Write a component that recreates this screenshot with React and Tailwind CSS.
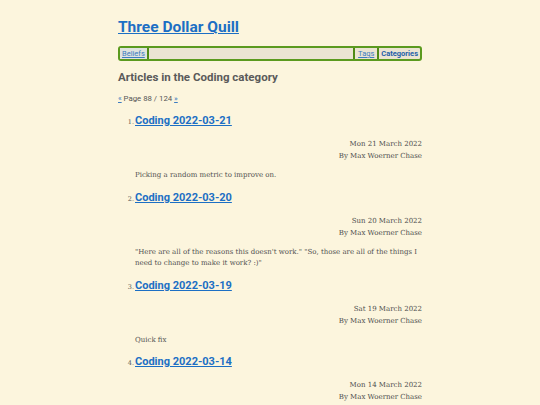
const articles = [
  {
    n: 1,
    title: 'Coding 2022-03-21',
    date: 'Mon 21 March 2022',
    summary: 'Picking a random metric to improve on.',
  },
  {
    n: 2,
    title: 'Coding 2022-03-20',
    date: 'Sun 20 March 2022',
    summary:
      '"Here are all of the reasons this doesn\'t work." "So, those are all of the things I need to change to make it work? :)"',
  },
  {
    n: 3,
    title: 'Coding 2022-03-19',
    date: 'Sat 19 March 2022',
    summary: 'Quick fix',
  },
  {
    n: 4,
    title: 'Coding 2022-03-14',
    date: 'Mon 14 March 2022',
    summary: '',
  },
];

const sans = "font-['Roboto',_'Noto_Sans',_sans-serif]";
const serif = "font-['DejaVu_Serif',_'Liberation_Serif',_serif]";

function NavBar() {
  return (
    <nav className={`flex items-stretch h-[15px] mt-[7px] border-2 border-[#5b9a1e] rounded-[3px] bg-[#ebe4d2] text-[7.5px] leading-[11px] ${sans}`}>
      <a href="#" className="px-[2px] bg-[#dfe3df] text-[#3d7cc0] underline">Beliefs</a>
      <span className="w-[2px] bg-[#4f8a16]" />
      <span className="flex-1" />
      <span className="w-[2px] bg-[#4f8a16]" />
      <a href="#" className="px-[3px] text-[#3d7cc0] underline">Tags</a>
      <span className="w-[2px] bg-[#4f8a16]" />
      <a href="#" className="px-[2px] font-bold text-[#1f5fa8]">Categories</a>
    </nav>
  );
}

function Article({ a }) {
  return (
    <li className="flex flex-col">
      <div className="flex items-baseline">
        <span className={`w-[17px] text-right pr-[1px] text-[6.5px] text-[#555] ${serif}`}>{a.n}.</span>
        <a href="#" className={`text-[11px] leading-[20px] font-bold text-[#1c6fc4] underline ${sans}`}>{a.title}</a>
      </div>
      <div className={`flex flex-col items-end mt-[7px] text-[7px] leading-[12px] text-[#4d4d4d] ${serif}`}>
        <span>{a.date}</span>
        <span>By Max Woerner Chase</span>
      </div>
      {a.summary && (
        <p className={`pl-[17px] mt-[8px] mb-[4px] text-[7px] leading-[11.5px] text-[#505050] ${serif}`}>
          {a.summary}
        </p>
      )}
    </li>
  );
}

export default function App() {
  return (
    <div className="min-h-[405px] bg-[#fcf5dd]">
      <div className="w-[304px] mx-auto pt-[14px]">
        <a href="#" className={`text-[15.5px] leading-[24px] font-bold text-[#1c6fc4] underline ${sans}`}>
          Three Dollar Quill
        </a>
        <NavBar />
        <h2 className={`mt-[7px] text-[11.5px] leading-[18px] font-bold text-[#5a5a5a] ${sans}`}>
          Articles in the Coding category
        </h2>
        <p className={`mt-[7px] text-[7.8px] leading-[12px] text-[#555] ${sans}`}>
          <a href="#" className="text-[#3d7cc0] underline">«</a> Page 88 / 124{' '}
          <a href="#" className="text-[#3d7cc0] underline">»</a>
        </p>
        <ol className="mt-[6px] flex flex-col gap-[2px]">
          {articles.map((a) => (
            <Article key={a.n} a={a} />
          ))}
        </ol>
      </div>
    </div>
  );
}
